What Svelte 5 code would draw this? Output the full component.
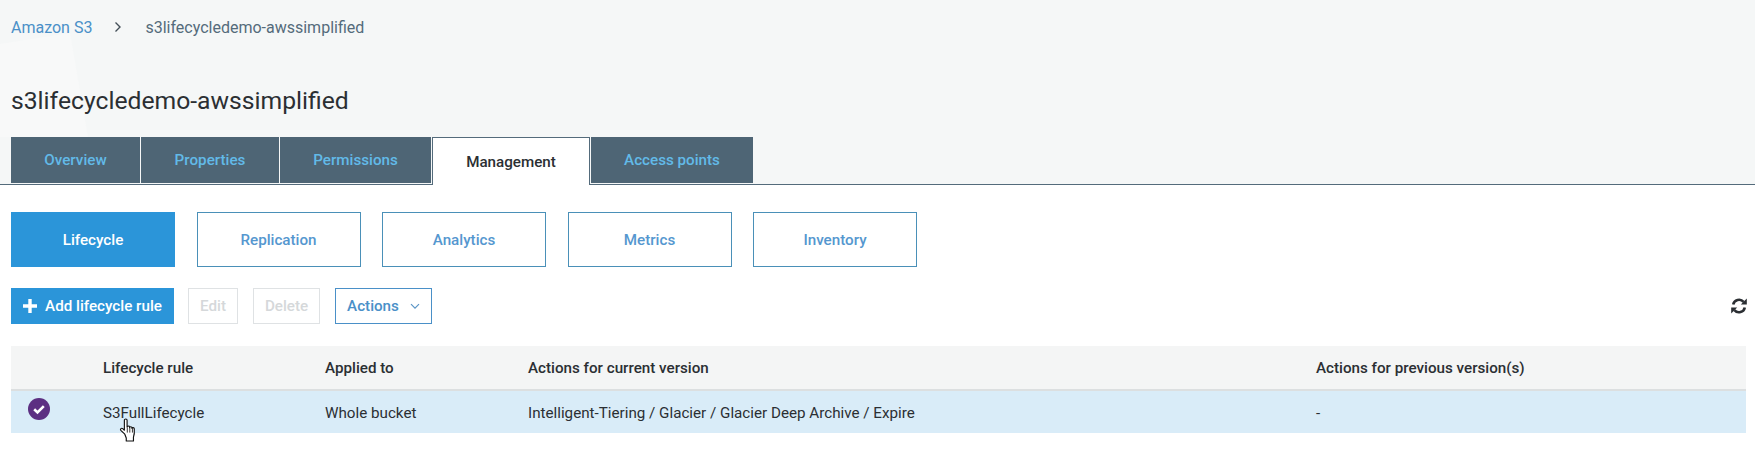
<script lang="ts">
  const tabs = ['Overview', 'Properties', 'Permissions', 'Management', 'Access points'];
  const sections = ['Lifecycle', 'Replication', 'Analytics', 'Metrics', 'Inventory'];
  const activeTab = 'Management';
  const activeSection = 'Lifecycle';
</script>

<div class="page">
  <header class="head">
    <svg class="watermark" width="100" height="137" viewBox="0 0 100 137"><path d="M0 44 70 33 88 137H0z" fill="#f8f9f9"/></svg>
    <nav class="crumbs">
      <a href="#s3">Amazon S3</a>
      <svg class="sep" width="8" height="12" viewBox="0 0 8 12"><path d="M1.5 1.5 6 6l-4.5 4.5" fill="none" stroke="#444f58" stroke-width="1.4"/></svg>
      <span>s3lifecycledemo-awssimplified</span>
    </nav>
    <h1>s3lifecycledemo-awssimplified</h1>
    <div class="tabs">
      {#each tabs as tab}
        <button class="tab" class:active={tab === activeTab}>{tab}</button>
      {/each}
    </div>
  </header>

  <main class="body">
    <div class="sections">
      {#each sections as s}
        <button class="section" class:active={s === activeSection}>{s}</button>
      {/each}
    </div>

    <div class="toolbar">
      <button class="btn primary">
        <svg width="14" height="14" viewBox="0 0 14 14"><path d="M7 0v14M0 7h14" stroke="#fff" stroke-width="3.4"/></svg>
        Add lifecycle rule
      </button>
      <button class="btn disabled edit">Edit</button>
      <button class="btn disabled del">Delete</button>
      <button class="btn outline">
        Actions
        <svg width="10" height="7" viewBox="0 0 10 7"><path d="M1 1.2 5 5.2l4-4" fill="none" stroke="#5b96c6" stroke-width="1.2"/></svg>
      </button>
      <svg class="refresh" width="16" height="16" viewBox="0 0 16 16">
        <path d="M2.2 6.6A6 6 0 0 1 12.6 3.8" fill="none" stroke="#2b2f33" stroke-width="2.6"/>
        <path d="M9.8 6.6h6V.6z" fill="#2b2f33"/>
        <path d="M13.8 9.4A6 6 0 0 1 3.4 12.2" fill="none" stroke="#2b2f33" stroke-width="2.6"/>
        <path d="M6.2 9.4h-6v6z" fill="#2b2f33"/>
      </svg>
    </div>

    <div class="table">
      <div class="row th">
        <span></span>
        <span>Lifecycle rule</span>
        <span>Applied to</span>
        <span>Actions for current version</span>
        <span>Actions for previous version(s)</span>
      </div>
      <div class="row td">
        <span class="check">
          <svg width="22" height="22" viewBox="0 0 22 22">
            <circle cx="11" cy="11" r="11" fill="#5c2f82"/>
            <path d="M6.2 11.2l3.3 3.2 6.3-6.3" fill="none" stroke="#fff" stroke-width="2.6"/>
          </svg>
        </span>
        <span>S3FullLifecycle</span>
        <span>Whole bucket</span>
        <span>Intelligent-Tiering / Glacier / Glacier Deep Archive / Expire</span>
        <span>-</span>
      </div>
    </div>
  </main>

  <svg class="cursor" width="19" height="24" viewBox="0 0 17.5 23">
    <path d="M5.2 15.5 1.4 11.8c-1-1.2.6-2.6 1.8-1.6l1.6 1.5V2.2c0-1.6 2.6-1.6 2.6 0v6.4c0-1.2 2.3-1.2 2.4 0v.6c0-1.1 2.2-1.1 2.3.1v.7c.1-1 2.1-1 2.2.3 .2 2.9.2 5.3-.8 8V22H6.6v-2.8z" fill="#fff" stroke="#111" stroke-width="1.1" stroke-linejoin="round"/>
    <path d="M7.6 9v5M10 9.4V14M12.5 10v4" stroke="#111" stroke-width=".8"/>
  </svg>
</div>

<style>
  :global(body) {
    margin: 0;
    background: #fff;
  }

  .page {
    position: relative;
    height: 469px;
    overflow: hidden;
    font-family: Roboto, 'Liberation Sans', sans-serif;
    font-size: 15.2px;
    color: #2b2f33;
  }

  .head {
    position: relative;
    isolation: isolate;
    height: 184px;
    background: #f5f7f7;
    border-bottom: 1px solid #546b7b;
    padding-left: 11px;
    display: flex;
    flex-direction: column;
  }

  .watermark {
    position: absolute;
    left: 0;
    top: 0;
    z-index: -1;
  }

  .crumbs {
    display: flex;
    align-items: center;
    height: 18px;
    margin-top: 18px;
    font-size: 16px;
    color: #546b7b;
  }

  .crumbs a {
    color: #4a90c8;
    text-decoration: none;
  }

  .sep {
    margin: 0 23px 0 22px;
  }

  h1 {
    margin: 49px 0 0;
    height: 32px;
    line-height: 32px;
    font-size: 24.7px;
    font-weight: 400;
    color: #2b2f33;
  }

  .tabs {
    display: grid;
    grid-template-columns: 129px 138px 151px 158px 162px;
    column-gap: 1px;
    margin-top: 20px;
    height: 47px;
  }

  button {
    font-family: inherit;
    cursor: pointer;
    padding: 0;
  }

  .tab {
    border: 0;
    height: 46px;
    background: #4e6575;
    color: #62bae8;
    font-size: 15.2px;
    font-weight: 500;
  }

  .tab.active {
    height: 48px;
    background: #fff;
    color: #2b2f33;
    border: 1px solid #546b7b;
    border-bottom: 0;
  }

  .body {
    padding: 27px 9px 0 11px;
  }

  .sections {
    display: flex;
    gap: 21.5px;
  }

  .section {
    width: 164px;
    height: 55px;
    background: #fff;
    border: 1px solid #4a90b8;
    color: #5597cf;
    font-size: 15.2px;
    font-weight: 500;
  }

  .section.active {
    background: #2b95d9;
    border-color: #2b95d9;
    color: #fff;
  }

  .toolbar {
    display: flex;
    align-items: center;
    margin-top: 21px;
    height: 36px;
  }

  .btn {
    height: 36px;
    display: inline-flex;
    align-items: center;
    justify-content: center;
    font-size: 15.2px;
    font-weight: 500;
    background: #fff;
  }

  .primary {
    width: 163px;
    gap: 8px;
    background: #2b95d9;
    border: 0;
    color: #fff;
  }

  .disabled {
    border: 1px solid #dfe2e4;
    color: #d5d8da;
  }

  .edit {
    width: 50px;
    margin-left: 14px;
  }

  .del {
    width: 67px;
    margin-left: 15px;
  }

  .outline {
    width: 97px;
    gap: 11px;
    margin-left: 15px;
    border: 1px solid #4a90c8;
    color: #4a90c8;
  }

  .refresh {
    margin-left: auto;
    margin-right: -1px;
  }

  .table {
    margin-top: 22px;
  }

  .row {
    display: grid;
    grid-template-columns: 92px 222px 203px 788px 1fr;
    align-items: center;
  }

  .th {
    height: 43px;
    background: #f4f5f5;
    border-bottom: 2px solid #dcdfe0;
    font-weight: 500;
  }

  .td {
    height: 42px;
    padding-top: 1px;
    box-sizing: border-box;
    background: #d9ecf8;
  }

  .check {
    display: flex;
    padding: 0 0 7px 17px;
  }

  .cursor {
    position: absolute;
    left: 119px;
    top: 418px;
  }
</style>
